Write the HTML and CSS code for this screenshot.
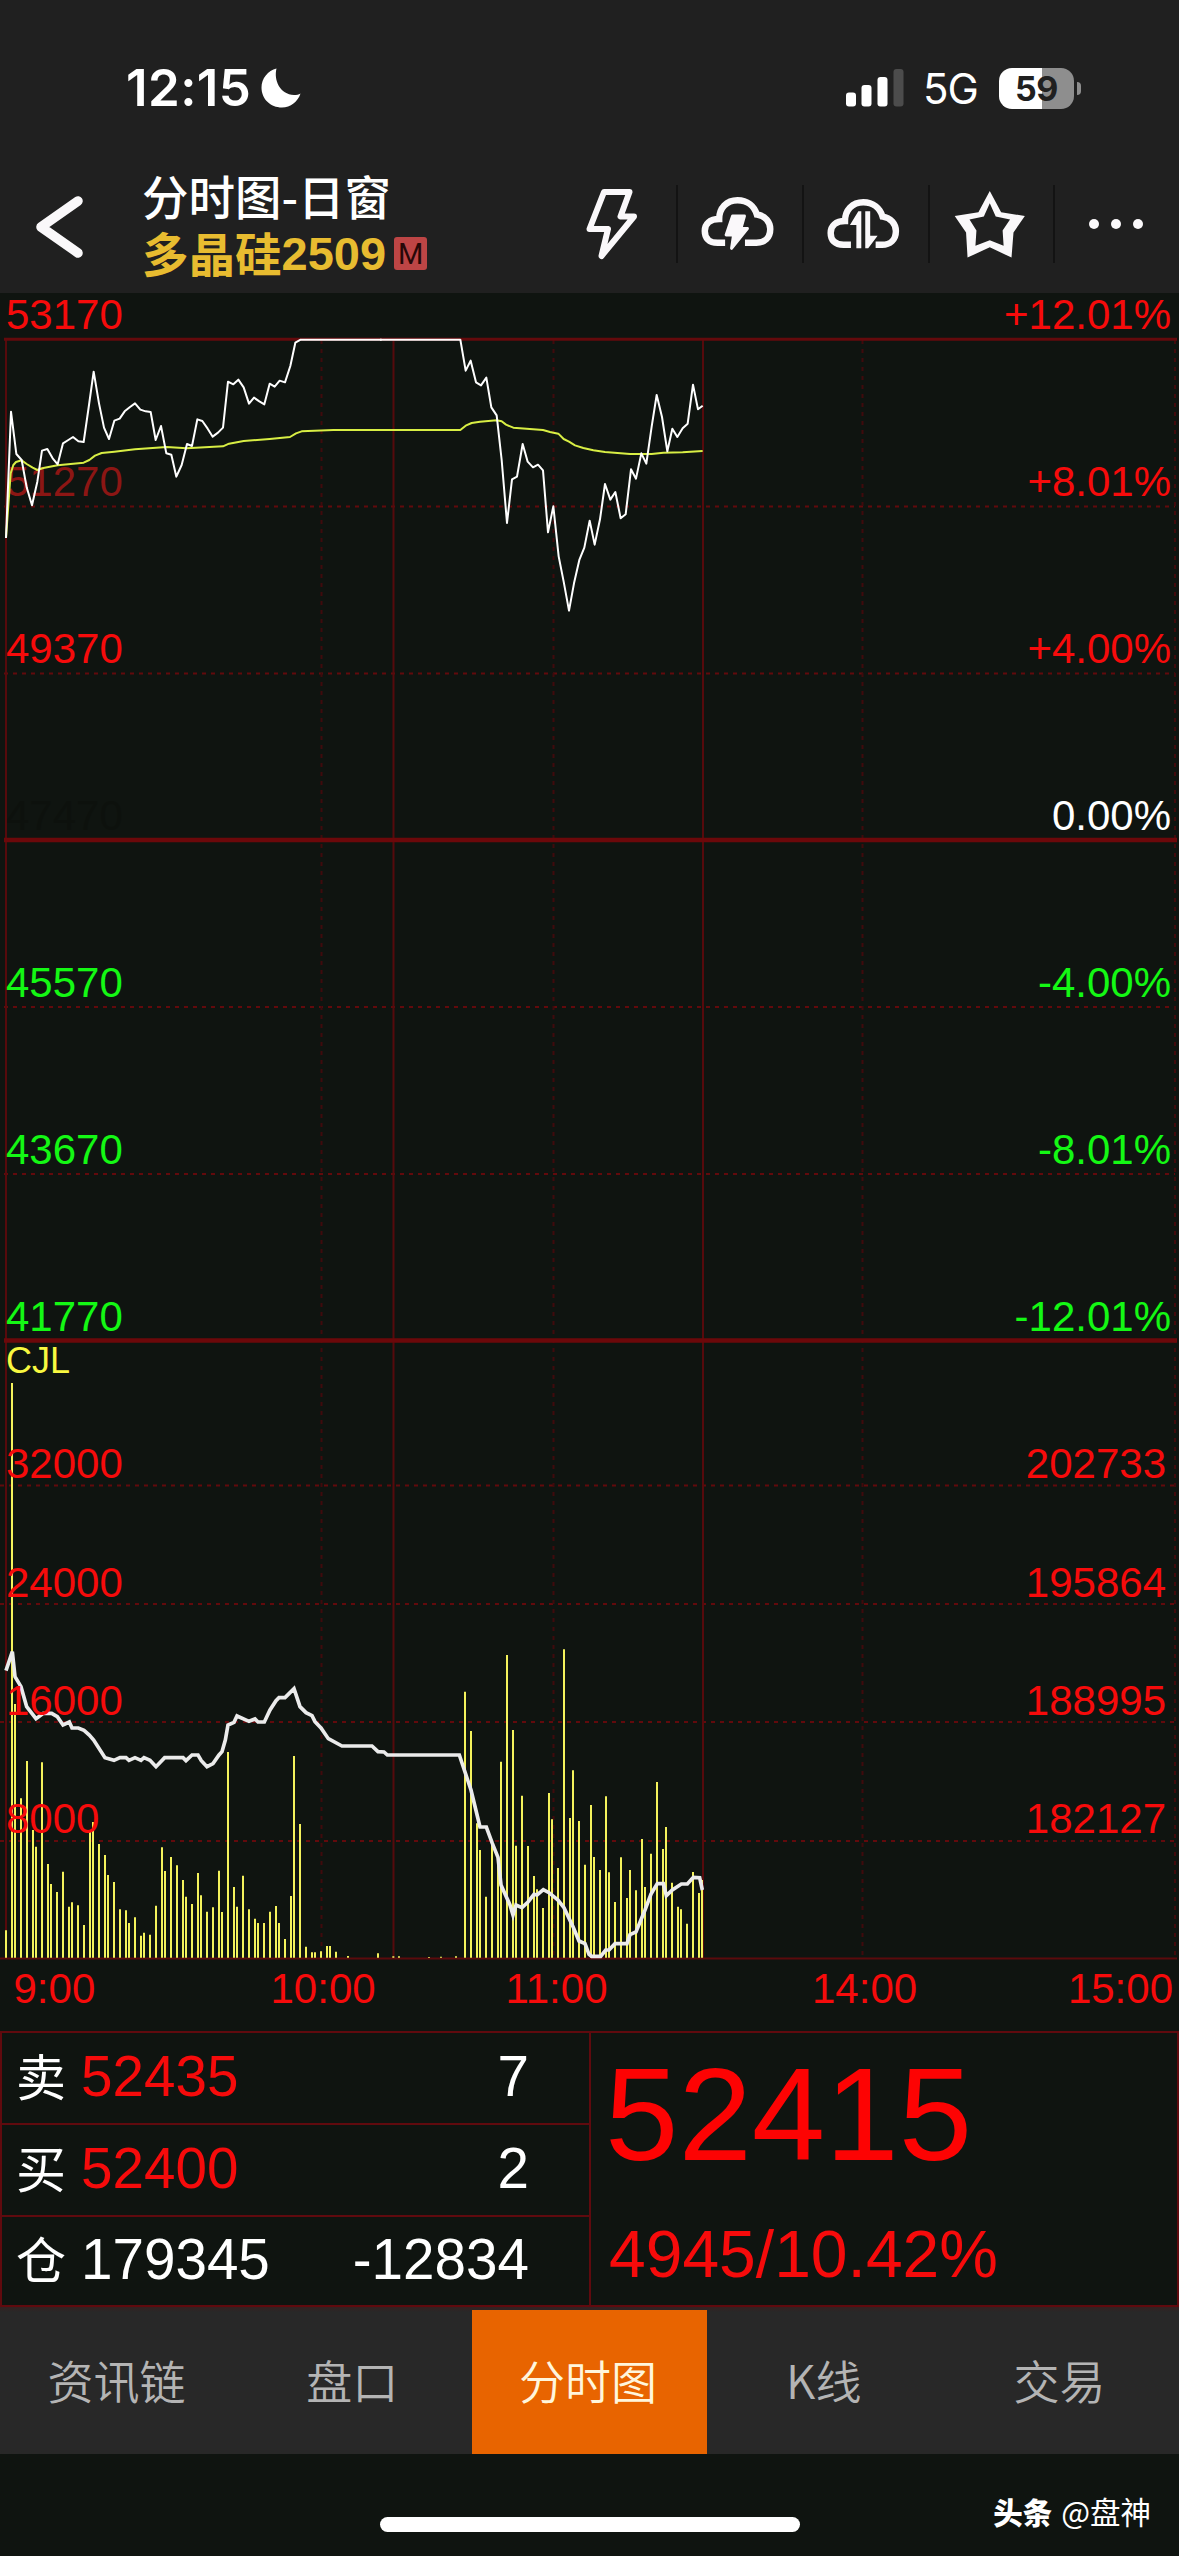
FILE: index.html
```html
<!DOCTYPE html>
<html lang="zh-CN">
<head>
<meta charset="utf-8">
<title>分时图-日窗</title>
<link rel="stylesheet" href="styles.css">
</head>
<body>
<div class="screen">
  <header class="top">
    <div class="status">
      <div class="status-left">
        <span class="clock">12:15</span>
        <svg class="moon" viewBox="0 0 40 40"><path d="M15.5 0.5C12.500 12 19 26.500 33 27C35.500 27 37.800 26.500 39.500 25.500C37 33.500 29.500 39.500 21 39.500C9.500 39.500 0.500 31 0.500 19.500C0.500 10.500 7 2.500 15.500 0.500Z" fill="#fff"/></svg>
      </div>
      <div class="status-right">
        <svg class="signal" viewBox="0 0 60 38"><g fill="#fff"><rect x="1" y="23.500" width="10" height="14" rx="3"/><rect x="16.500" y="16" width="10" height="21.500" rx="3"/><rect x="32.500" y="8" width="10" height="29.500" rx="3"/></g><rect x="48.500" y="0" width="10" height="37.500" rx="3" fill="#4c4c4c"/></svg>
        <span class="net">5G</span>
        <div class="battery"><span>59</span></div>
        <div class="nub"></div>
      </div>
    </div>
    <div class="nav">
      <svg class="back" viewBox="0 0 52 68"><path d="M46 8L9 34L46 60" fill="none" stroke="#faf8fa" stroke-width="9.500" stroke-linecap="round" stroke-linejoin="round"/></svg>
      <div class="titles">
        <div class="title">分时图-日窗</div>
        <div class="contract">多晶硅<b>2509</b><i>M</i></div>
      </div>
      <div class="tools">
        <svg viewBox="551 185 125 78"><path d="M604 192H629.500L620.500 216.500H634L601.500 256L608 229H589.500Z" fill="none" stroke="#faf8fa" stroke-width="6" stroke-linejoin="round"/></svg>
        <svg class="cut" viewBox="678 185 125 78"><path d="M725.500 243H718C709 243 705 238 705 231C705 224 710 219 719.500 219C719.500 208 727 200 738 200C748 200 755 206 757.500 214.500C766 215.500 771 222 771 229C771 238 765 243 757 243H745.500" fill="none" stroke="#faf8fa" stroke-width="6.500"/><path d="M733 216H745L741.500 228.500H748L732 248.500L734 235H726.500Z" fill="#faf8fa" stroke="#faf8fa" stroke-width="3" stroke-linejoin="round"/></svg>
        <svg class="cut" viewBox="804 185 125 78"><path d="M851.500 245H844C835 245 831 240 831 233C831 226 836 221 845.500 221C845.500 210 853 202 864 202C874 202 881 208 883.500 216.500C892 217.500 897 224 897 231C897 240 891 245 883 245H876.500" fill="none" stroke="#faf8fa" stroke-width="6.500"/><path d="M862 211V248.500H857V225H850.500L859 211ZM866 211H871V236H878.500L869 248.500H866Z" fill="#faf8fa"/></svg>
        <svg class="cut" viewBox="930 185 125 78"><path fill-rule="evenodd" d="M990.500 190.500L1002 212L1026 216L1014.500 232.500L1012.500 258L990.500 247.500L968 258L966.500 232.500L955 216L979 212ZM990.500 203L984.500 216.500L970 219.500L977 230.500L976 246L990.500 240.500L1004.500 246L1003.500 230.500L1011 219.500L996.500 216.500Z" fill="#faf8fa"/></svg>
        <svg class="cut" viewBox="1055 185 124 78"><g fill="#faf8fa"><circle cx="1094" cy="224" r="5"/><circle cx="1116" cy="224" r="5"/><circle cx="1138" cy="224" r="5"/></g></svg>
      </div>
    </div>
  </header>

  <svg class="chart" viewBox="0 293 1179 1738">
    <g class="label">
      <text class="faded" x="6" y="496">51270</text>
      <text class="ghost" x="6" y="830">47470</text>
    </g>
    <g class="dots">
      <path d="M4 506.500H1175M4 673.500H1175M4 1007H1175M4 1174H1175M0 1485.500H1175M0 1604H1175M0 1722H1175M0 1841H1175"/>
      <path class="dim" d="M321.500 340V1958M553.500 340V1958M862.500 340V1958M1175 340V1958"/>
    </g>
    <g class="rules">
      <path class="thin" d="M6 339V1958M393.500 339V1958M703 339V1958"/>
      <path class="mid" d="M4 339.300H1177"/>
      <path class="thick" d="M4 840H1177M4 1340.600H1177"/>
      <path class="base" d="M0 1958.500H1177"/>
    </g>

    <g transform="translate(0 280) scale(.33333)">
      <polyline class="avg" points="18,774 24,690 32,580 40,555 48,546 65,541 80,552 98,563 112,570 130,564 173,556 251,548 268,540 285,527 305,519 343,515 405,508 500,501 560,505 669,499 687,491 731,483 809,477 870,471 888,460 905,454 1000,450 1200,450"/>
      <polyline class="price" points="18,774 33,395 49,522 65,540 80,622 96,676 112,605 126,512 142,507 158,535 173,553 189,490 205,480 219,471 235,484 251,486 267,375 281,275 297,370 312,443 327,477 343,422 359,416 374,394 390,381 405,370 421,389 437,394 452,396 467,480 483,438 499,520 514,524 529,590 545,555 561,492 576,498 592,418 607,423 623,446 638,470 654,458 669,443 684,305 700,313 715,299 731,322 747,371 762,353 778,364 793,373 809,311 824,320 839,302 855,307 871,258 886,188 902,179 1145,179"/>
    </g>
    <g transform="translate(380 280) scale(.33333)">
      <polyline class="avg" points="0,450 241,450 257,437 275,429 300,425 350,421 365,424 378,434 400,443 489,450 510,456 535,461 551,477 567,485 585,496 610,504 640,511 675,516 750,522 815,522 850,518 908,517 968,513"/>
      <polyline class="price" points="0,179 241,179 257,272 272,242 288,307 303,316 319,293 334,382 350,406 365,540 381,729 396,598 411,590 428,492 443,545 459,562 474,554 489,571 504,757 520,679 536,829 551,905 567,992 582,910 598,840 613,803 629,722 644,794 660,718 675,612 691,659 706,636 722,715 737,703 753,568 768,596 784,520 799,551 815,440 830,345 846,411 862,514 877,446 892,471 908,445 923,431 939,314 954,388 968,377"/>
    </g>

    <g transform="translate(0 1660) scale(.33333)">
      <path class="bars" d="M18 893V811M36 893V-831M45 893V132M63 893V415M81 893V303M99 893V510M108 893V560M126 893V307M144 893V612M153 893V672M171 893V696M189 893V635M207 893V740M216 893V727M234 893V736M252 893V795M270 893V515M279 893V486M297 893V552M315 893V585M324 893V645M342 893V666M360 893V748M378 893V751M387 893V789M405 893V772M423 893V827M432 893V818M450 893V824M468 893V737M486 893V562M495 893V633M513 893V591M531 893V616M549 893V660M558 893V710M576 893V732M594 893V639M603 893V706M621 893V755M639 893V742M657 893V632M666 893V756M684 893V276M702 893V681M711 893V740M729 893V647M747 893V748M765 893V776M774 893V789M792 893V789M810 893V755M828 893V738M837 893V789M855 893V837M873 893V708M882 893V288M900 893V492M918 893V860M936 893V877M945 893V877M963 893V874M981 893V858M990 893V858M1008 893V875M1044 893V888M1134 893V880M1180 893V889M1197 893V889"/>
      <polyline class="oi" points="18,32 37,-25 45,50 63,80 80,140 108,176 130,160 155,160 172,170 189,195 208,186 216,204 235,204 252,211 268,225 281,240 315,293 342,301 360,293 378,293 387,301 405,293 423,301 432,293 450,301 468,320 494,293 549,293 558,302 576,285 594,285 604,302 621,320 639,311 657,285 666,275 676,240 684,195 702,187 711,168 747,184 765,177 774,186 793,186 810,150 828,122 837,113 855,113 882,86 900,140 918,158 936,167 945,185 963,204 985,236 1026,258 1116,258 1134,275 1152,276 1162,285 1200,285"/>
    </g>
    <g transform="translate(400 1640) scale(.33333)">
      <path class="bars" d="M87 953V951M123 953V950M168 953V949M195 953V155M213 953V273M231 953V550M240 953V630M258 953V770M276 953V615M294 953V650M303 953V365M321 953V45M339 953V270M348 953V617M366 953V467M384 953V618M402 953V708M411 953V748M429 953V804M447 953V459M456 953V538M474 953V684M492 953V28M510 953V534M519 953V391M537 953V543M555 953V674M573 953V495M582 953V651M600 953V690M618 953V469M627 953V697M645 953V786M663 953V652M681 953V774M690 953V690M708 953V751M726 953V597M735 953V741M753 953V641M771 953V426M789 953V627M798 953V561M816 953V728M834 953V800M843 953V808M861 953V851M879 953V696M897 953V759M906 953V720"/>
      <polyline class="oi" points="0,345 178,345 213,450 240,561 259,561 277,610 294,652 303,735 330,795 339,825 348,795 366,803 384,786 402,763 411,765 430,749 447,758 474,780 492,803 519,860 537,903 555,911 567,943 575,949 602,949 617,930 627,930 645,911 681,911 690,884 708,876 735,810 753,762 772,731 790,731 799,767 817,750 844,732 862,732 880,712 899,713 907,750"/>
    </g>

    <g class="label up">
      <text x="6" y="329">53170</text>
      <text x="6" y="663">49370</text>
      <text x="6" y="1478">32000</text>
      <text x="6" y="1597">24000</text>
      <text x="6" y="1715">16000</text>
      <text x="6" y="1833">8000</text>
      <text x="13.500" y="2002.500">9:00</text>
      <text x="270.500" y="2002.500">10:00</text>
      <text x="505.500" y="2002.500">11:00</text>
      <text x="812" y="2002.500">14:00</text>
    </g>
    <g class="label up end">
      <text x="1171" y="329">+12.01%</text>
      <text x="1171" y="496">+8.01%</text>
      <text x="1171" y="663">+4.00%</text>
      <text x="1166" y="1478">202733</text>
      <text x="1166" y="1597">195864</text>
      <text x="1166" y="1715">188995</text>
      <text x="1166" y="1833">182127</text>
      <text x="1173" y="2002.500">15:00</text>
    </g>
    <g class="label flat end"><text x="1171" y="830">0.00%</text></g>
    <g class="label down">
      <text x="6" y="997">45570</text>
      <text x="6" y="1164">43670</text>
      <text x="6" y="1331">41770</text>
    </g>
    <g class="label down end">
      <text x="1171" y="997">-4.00%</text>
      <text x="1171" y="1164">-8.01%</text>
      <text x="1171" y="1331">-12.01%</text>
    </g>
    <text class="cjl" x="6" y="1372.500">CJL</text>
  </svg>

  <section class="quote">
    <div class="book">
      <div class="row"><span class="side">卖</span><span class="num red">52435</span><span class="qty">7</span></div>
      <div class="row"><span class="side">买</span><span class="num red">52400</span><span class="qty">2</span></div>
      <div class="row"><span class="side">仓</span><span class="num">179345</span><span class="qty">-12834</span></div>
    </div>
    <div class="last">
      <div class="last-price">52415</div>
      <div class="change">4945/10.42%</div>
    </div>
  </section>

  <nav class="tabs">
    <div class="tab">资讯链</div>
    <div class="tab">盘口</div>
    <div class="tab active">分时图</div>
    <div class="tab">K线</div>
    <div class="tab">交易</div>
  </nav>

  <footer class="bottom">
    <div></div>
    <div class="home"></div>
    <div class="mark"><b>头条</b><span>@盘神</span></div>
  </footer>
</div>
</body>
</html>
```
FILE: styles.css
```css
* { box-sizing: border-box; }
body { margin: 0; background: #0f1410; }
.screen {
  width: 1179px; height: 2556px; overflow: hidden;
  display: flex; flex-direction: column;
  background: #0f1410; color: #fff;
  font-family: "Liberation Sans", "Noto Sans CJK SC", sans-serif;
}
svg { display: block; flex: none; }

.top { height: 293px; background: #202020; flex: none; }
.status { height: 157px; padding: 55px 98px 0 126px; display: flex; justify-content: space-between; }
.status-left, .status-right { display: flex; align-items: center; height: 66px; }
.clock { font: 600 51px/66px Inter, sans-serif; letter-spacing: .4px; width: 135px; }
.moon { width: 40px; height: 40px; }
.signal { width: 60px; height: 38px; }
.net { font: 400 42px/66px Inter, sans-serif; width: 75px; margin: 2px 0 0 18px; letter-spacing: -1px; }
.battery {
  width: 75px; height: 41px; border-radius: 13px; margin-left: 1px;
  background: linear-gradient(90deg, #fff 58%, #8e8e8e 58%);
  color: #202020; font: 700 34px/41px Inter, sans-serif; text-align: center;
}
.battery span { letter-spacing: -.5px; }
.nub { width: 4px; height: 13px; margin-left: 3px; background: #8e8e8e; border-radius: 0 4px 4px 0; }

.nav { height: 136px; display: flex; }
.back { width: 52px; height: 68px; margin: 36px 58px 0 32px; }
.titles { width: 409px; padding-top: 10px; font-family: "Noto Sans CJK SC", sans-serif; }
.title { font-size: 46.500px; line-height: 56px; font-weight: 500; white-space: nowrap; }
.contract {
  display: flex; align-items: center; height: 57px;
  font-size: 46.500px; line-height: 57px; font-weight: 700; color: #e8bc30;
}
.contract b { font: 700 47px/57px "Liberation Sans", sans-serif; margin-top: 4px; }
.contract i {
  width: 33px; height: 33px; margin: 3px 0 0 8px; border-radius: 3px; background: #bd4545;
  color: #260808; font: 400 29px/34px Roboto, sans-serif; text-align: center;
}
.tools { display: grid; grid-template-columns: 125px 126px 125.500px 125.500px 126px; height: 78px; margin-top: 28px; }
.tools svg { width: 100%; height: 78px; }
.tools .cut { border-left: 2px solid #131313; }

.chart { width: 1179px; height: 1738px; overflow: visible; }
.chart path, .chart polyline { fill: none; }
.label { font-size: 42px; }
.up { fill: #f60b0b; }
.down { fill: #14f814; }
.flat { fill: #fff; }
.faded { fill: #8c1614; }
.ghost { fill: #0d110d; }
.end { text-anchor: end; }
.cjl { font-size: 36px; fill: #f8f840; }
.dots { stroke: #620a0c; stroke-width: 2; stroke-dasharray: 4 5; }
.dots .dim { stroke: #400a0c; }
.rules .thin { stroke: #560a0c; stroke-width: 2; }
.rules .mid { stroke: #640a0c; stroke-width: 3; }
.rules .thick { stroke: #6c080a; stroke-width: 4.500; }
.rules .base { stroke: #5c0a0c; stroke-width: 2; }
.price { stroke: #fff; stroke-width: 6; stroke-linejoin: round; }
.avg { stroke: #d8ee44; stroke-width: 6; stroke-linejoin: round; }
.oi { stroke: #ebebeb; stroke-width: 11; stroke-linejoin: miter; }
.bars { stroke: #f4f25c; stroke-width: 6; }

.quote {
  display: grid; grid-template-columns: 589px 1fr; height: 276px; flex: none;
  border: 2px solid #600a0e;
}
.book { border-right: 2px solid #600a0e; display: grid; grid-template-rows: 92px 92px 88px; }
.row { display: flex; align-items: center; padding: 0 60px 2px 14px; font-size: 56.600px; line-height: 80px; border-bottom: 2px solid #600a0e; }
.row:last-child { border-bottom: 0; }
.side { font-size: 50px; width: 65px; margin-top: -7px; font-family: "Noto Sans CJK SC", sans-serif; font-weight: 400; }
.qty { margin-left: auto; }
.red { color: #f60b0b; }
.last { padding-left: 14px; color: #fd0303; }
.last-price { font-size: 132px; line-height: 152px; padding-top: 6px; }
.change { font-size: 66px; line-height: 76px; padding-top: 25px; margin-left: 4px; color: #f60b0b; }

.tabs {
  display: grid; grid-template-columns: repeat(5, 1fr); height: 147px; padding-top: 3px; flex: none;
  background: linear-gradient(#352020, #282828 5px);
}
.tab { text-align: center; padding-right: 3px; font: 350 46px/138px "Noto Sans CJK SC", sans-serif; color: #b4b4b4; }
.active { background: #e86400; color: #fff6dc; }

.bottom { flex: 1; display: grid; grid-template-columns: 380px 420px 1fr; }
.home { height: 15px; margin-top: 63px; border-radius: 8px; background: #fff; }
.mark { display: flex; gap: 9px; justify-content: flex-end; padding: 35px 28px 0 0; font: 400 30.500px/44px "Noto Sans CJK SC", sans-serif; }
.mark b { font-weight: 900; font-size: 29.500px; }
```
